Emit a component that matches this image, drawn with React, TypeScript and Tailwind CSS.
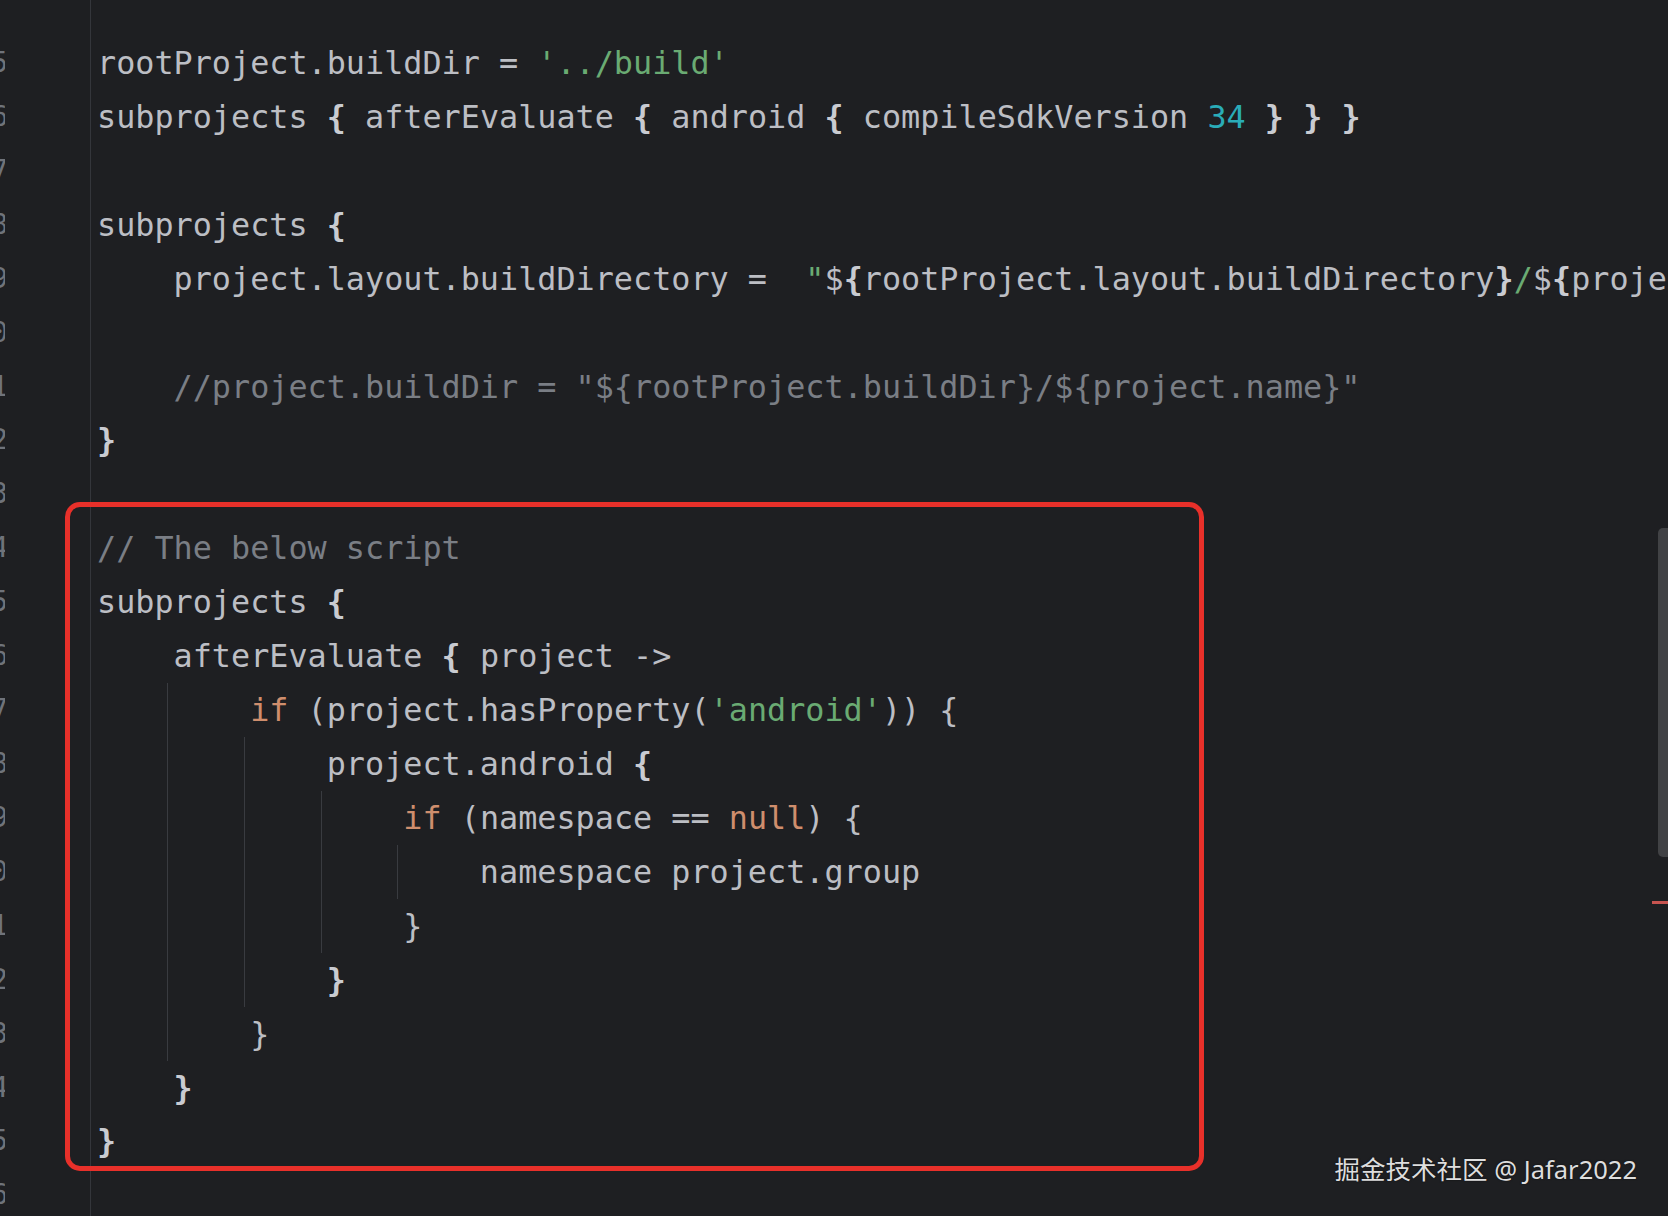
import React from "react";

type Seg = [string, string];

const D = "text-[#bcbec4]";
const B = "text-[#c9cbd1] font-bold";
const S = "text-[#6aab73]";
const N = "text-[#2aacb8]";
const K = "text-[#cf8e6d]";
const C = "text-[#7a7e85]";

const lines: { segs: Seg[]; guides?: number[] }[] = [
  { segs: [["rootProject.buildDir = ", D], ["'../build'", S]] },
  {
    segs: [
      ["subprojects ", D],
      ["{", B],
      [" afterEvaluate ", D],
      ["{", B],
      [" android ", D],
      ["{", B],
      [" compileSdkVersion ", D],
      ["34", N],
      [" ", D],
      ["}", B],
      [" ", D],
      ["}", B],
      [" ", D],
      ["}", B],
    ],
  },
  { segs: [] },
  { segs: [["subprojects ", D], ["{", B]] },
  {
    segs: [
      ["    project.layout.buildDirectory =  ", D],
      ['"', S],
      ["$", D],
      ["{", B],
      ["rootProject.layout.buildDirectory", D],
      ["}", B],
      ["/", S],
      ["$", D],
      ["{", B],
      ["project.name", D],
      ["}", B],
      ['"', S],
    ],
  },
  { segs: [] },
  { segs: [['    //project.buildDir = "${rootProject.buildDir}/${project.name}"', C]] },
  { segs: [["}", B]] },
  { segs: [] },
  { segs: [["// The below script", C]] },
  { segs: [["subprojects ", D], ["{", B]] },
  { segs: [["    afterEvaluate ", D], ["{", B], [" project ->", D]] },
  {
    segs: [
      ["        ", D],
      ["if", K],
      [" (project.hasProperty(", D],
      ["'android'", S],
      [")) {", D],
    ],
    guides: [1],
  },
  { segs: [["            project.android ", D], ["{", B]], guides: [1, 2] },
  {
    segs: [
      ["                ", D],
      ["if", K],
      [" (namespace == ", D],
      ["null", K],
      [") {", D],
    ],
    guides: [1, 2, 3],
  },
  { segs: [["                    namespace project.group", D]], guides: [1, 2, 3, 4] },
  { segs: [["                }", D]], guides: [1, 2, 3] },
  { segs: [["            ", D], ["}", B]], guides: [1, 2] },
  { segs: [["        }", D]], guides: [1] },
  { segs: [["    ", D], ["}", B]] },
  { segs: [["}", B]] },
  { segs: [] },
];

const guideClass: Record<number, string> = {
  1: "left-[70px]",
  2: "left-[147px]",
  3: "left-[224px]",
  4: "left-[300px]",
};

const mono = { fontFamily: '"DejaVu Sans Mono", "Liberation Mono", monospace' };

export default function App() {
  return (
    <div className="relative w-[1668px] h-[1216px] overflow-hidden bg-[#1e1f22]">
      <div className="flex h-full">
        {/* gutter with line numbers scrolled mostly out of view */}
        <div className="w-[91px] shrink-0 h-full border-r border-[#34363b] pt-[36px]">
          <div className="w-[5px] overflow-hidden" style={mono}>
            {lines.map((_, i) => (
              <div
                key={i}
                className="h-[53.93px] leading-[53.93px] flex justify-end text-[28px] text-[#6f737a] whitespace-pre"
              >
                <span className="-mr-[3px]">{i + 15}</span>
              </div>
            ))}
          </div>
        </div>
        {/* code */}
        <div className="flex-1 h-full overflow-hidden pt-[36px] pl-[6px]" style={mono}>
          {lines.map((ln, i) => (
            <div
              key={i}
              className="relative h-[53.93px] leading-[53.93px] text-[31.8px] whitespace-pre"
            >
              {(ln.guides || []).map((g) => (
                <div
                  key={g}
                  className={`absolute top-0 bottom-0 w-px bg-[#393b40] ${guideClass[g]}`}
                />
              ))}
              {ln.segs.length === 0 ? (
                <span> </span>
              ) : (
                ln.segs.map((s, j) => (
                  <span key={j} className={s[1]}>
                    {s[0]}
                  </span>
                ))
              )}
            </div>
          ))}
        </div>
      </div>

      {/* red highlight box */}
      <div className="absolute left-[65px] top-[502px] w-[1139px] h-[669px] border-[5px] border-[#e8302a] rounded-[15px]" />

      {/* scrollbar thumb */}
      <div className="absolute right-0 top-[528px] w-[10px] h-[329px] bg-[#414245] rounded-l-[5px]" />
      {/* error marker */}
      <div className="absolute left-[1652px] top-[901px] w-[16px] h-[3px] bg-[#c75450]" />

      {/* watermark */}
      <div
        className="absolute right-[31px] top-[1152px] text-[25.5px] leading-[34px] text-[#dedede] whitespace-pre"
        style={{ fontFamily: '"Noto Sans", "Noto Sans CJK SC", sans-serif', textShadow: "0 0 2px rgba(0,0,0,0.6)" }}
      >
        掘金技术社区 @ Jafar2022
      </div>
    </div>
  );
}
